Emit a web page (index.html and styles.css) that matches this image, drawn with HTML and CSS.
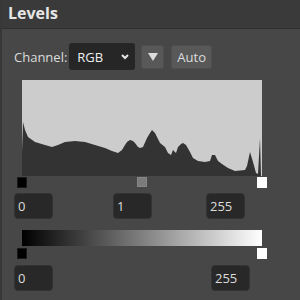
FILE: index.html
```html
<!DOCTYPE html>
<html>

<head>
    <meta charset="utf-8" />
    <title>Levels</title>
    <link rel="stylesheet" href="styles.css">
</head>

<body>
    <div class="panel">
        <div class="panel-title">Levels</div>
        <div class="panel-body">
            <div class="channel-row">
                <span class="label">Channel:</span>
                <div class="select">
                    <span>RGB</span>
                    <svg width="8" height="6" viewBox="0 0 8 6"><path d="M1 1 L4 4 L7 1" fill="none" stroke="#e6e6e6" stroke-width="2" /></svg>
                </div>
                <button class="btn btn-icon">
                    <svg width="10" height="8" viewBox="0 0 10 8"><path d="M0 0 H10 L5 8 Z" fill="#dcdcdc" /></svg>
                </button>
                <button class="btn">Auto</button>
            </div>

            <svg class="histogram" width="240" height="96" viewBox="0 0 240 96">
                <rect width="240" height="96" fill="#cccccc" />
                <polygon fill="#333333" points="0,96 0,72 1,42 3,50 6,57 13,62 23,65 30,67 36,65 43,62 53,61 63,62 73,65 83,68 90,71 96,73 100,70 103,65 105,62 108,60 111,61 113,63 116,67 118,68 121,67 125,58 128,53 130,50 133,53 136,59 138,63 143,67 146,73 149,75 151,70 154,73 156,67 159,64 161,63 164,65 168,72 171,78 176,81 183,82 188,81 190,75 193,75 196,81 200,84 206,88 213,91 223,90 225,86 228,72 231,82 234,93 236,94 238,58 239,96 240,96" />
            </svg>

            <div class="track">
                <span class="handle handle-black" style="left: 0px"></span>
                <span class="handle handle-gray" style="left: 120px"></span>
                <span class="handle handle-white" style="left: 240px"></span>
            </div>

            <div class="values values-in">
                <input class="num" type="text" value="0" />
                <input class="num num-mid" type="text" value="1" />
                <input class="num num-high" type="text" value="255" />
            </div>

            <div class="gradient"></div>

            <div class="track track-out">
                <span class="handle handle-black" style="left: 0px"></span>
                <span class="handle handle-white" style="left: 240px"></span>
            </div>

            <div class="values values-out">
                <input class="num" type="text" value="0" />
                <input class="num num-out-high" type="text" value="255" />
            </div>
        </div>
    </div>
</body>

</html>
```

FILE: styles.css
```css
html {
    margin: 0px;
    padding: 0px;
    width: 100%;
    height: 100%;
}

body {
    font-family: 'Open Sans', 'Liberation Sans', sans-serif;
    margin: 0px;
    padding: 0px;
    color: #dcdcdc;
    background-color: #474747;
    width: 100%;
    height: 100%;
}

.panel {
    width: 100%;
    height: 100%;
    box-sizing: border-box;
    border-left: 2px solid #383838;
    background-color: #474747;
}

.panel-title {
    height: 28px;
    line-height: 26px;
    padding-left: 6px;
    font-size: 16px;
    font-weight: bold;
    color: #e6e6e6;
    background-color: #3a3a3a;
    border-bottom: 1px solid #2e2e2e;
}

.panel-body {
    padding-left: 12px;
    font-size: 13px;
}

.channel-row {
    display: flex;
    align-items: center;
    height: 27px;
    margin-top: 14px;
}

.label {
    margin-right: 2px;
}

.select {
    width: 66px;
    height: 27px;
    box-sizing: border-box;
    display: flex;
    align-items: center;
    justify-content: space-between;
    padding: 0px 6px 0px 8px;
    background-color: #262626;
    border-radius: 3px;
    color: #eeeeee;
}

.btn {
    height: 24px;
    box-sizing: border-box;
    margin: 0px;
    padding: 0px 5px;
    font-family: inherit;
    font-size: 13px;
    color: #dcdcdc;
    background-color: #585858;
    border: 1px solid #4e4e4e;
    border-radius: 2px;
    display: flex;
    align-items: center;
    justify-content: center;
    margin-left: 7px;
}

.btn-icon {
    width: 23px;
    margin-left: 6px;
    padding: 0px;
}

.histogram {
    display: block;
    margin-top: 10px;
    margin-left: 8px;
}

.track {
    position: relative;
    width: 240px;
    height: 11px;
    margin-left: 8px;
    margin-top: 1px;
}

.handle {
    position: absolute;
    top: 0px;
    width: 10px;
    height: 11px;
    margin-left: -5px;
    box-sizing: border-box;
}

.handle-black {
    background-color: #000000;
    border: 1px solid #1a1a1a;
}

.handle-gray {
    background-color: #7b7b7b;
    border: 1px solid #858585;
    height: 10px;
}

.handle-white {
    background-color: #ffffff;
}

.values {
    display: flex;
    height: 26px;
}

.values-in {
    margin-top: 5px;
}

.values-out {
    margin-top: 6px;
}

.num {
    width: 39px;
    height: 26px;
    box-sizing: border-box;
    margin: 0px;
    padding: 0px 3px;
    font-family: inherit;
    font-size: 13px;
    color: #dcdcdc;
    background-color: #282828;
    border: 1px solid #333333;
    border-radius: 4px;
    outline: none;
}

.num-mid {
    margin-left: 60px;
}

.num-high {
    margin-left: 54px;
}

.num-out-high {
    margin-left: 158px;
}

.gradient {
    width: 240px;
    height: 16px;
    margin-left: 8px;
    margin-top: 11px;
    background: linear-gradient(to right, #000000, #ffffff);
}

.track-out {
    margin-top: 2px;
}
```
